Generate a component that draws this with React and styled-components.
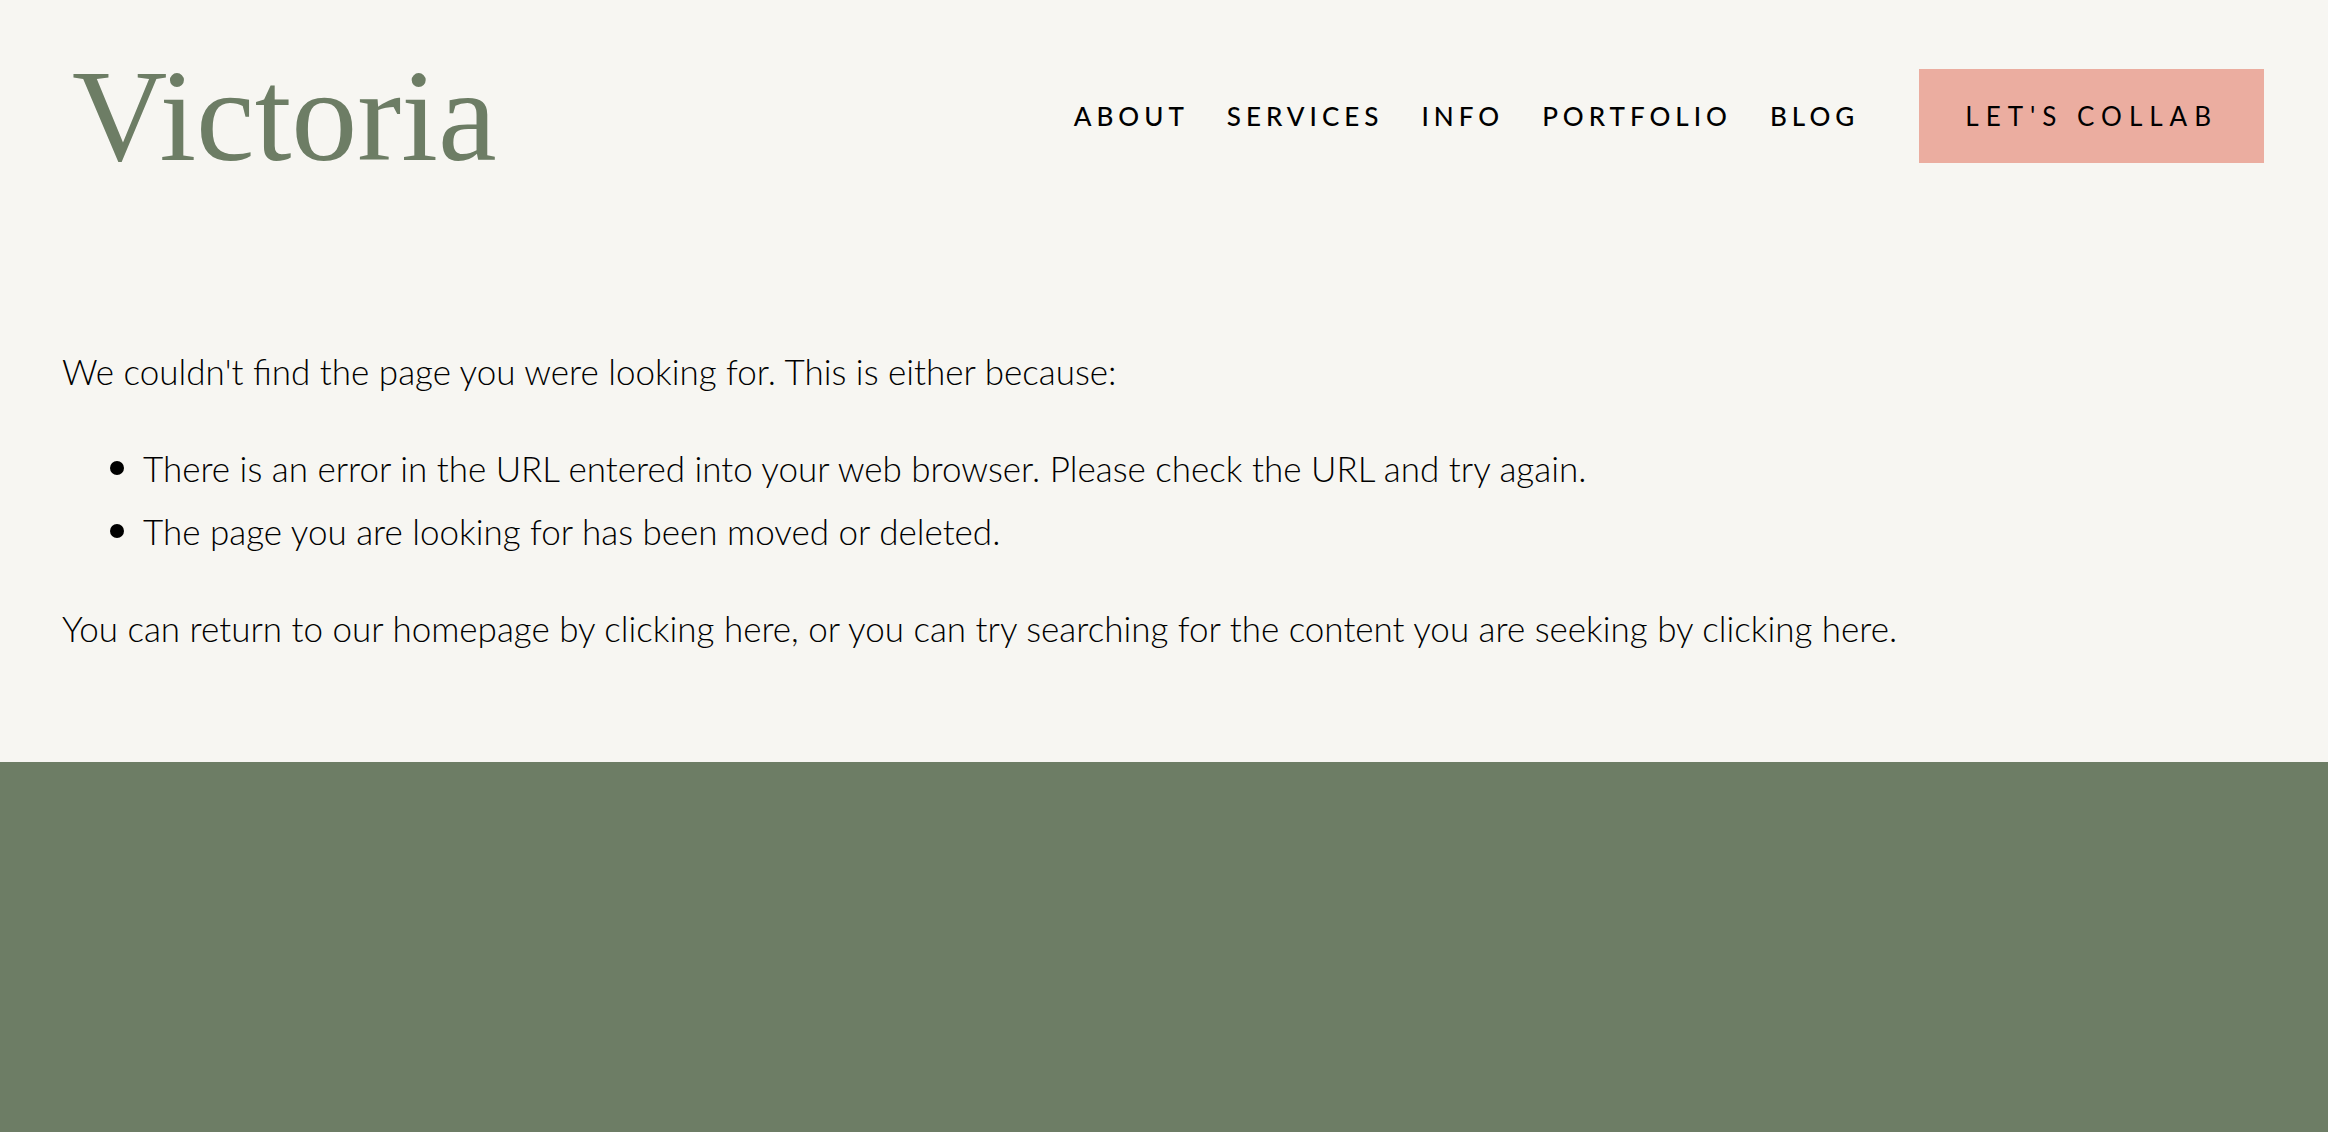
import React from "react";
import styled, { createGlobalStyle } from "styled-components";

const color = {
  cream: "#f7f6f2",
  sage: "#6d7d65",
  blush: "#ebada0",
  ink: "#000000",
};

const GlobalStyle = createGlobalStyle`
  *, *::before, *::after { box-sizing: border-box; }
  body {
    margin: 0;
    background: ${color.sage};
    color: ${color.ink};
    font-family: Lato, "Open Sans", sans-serif;
  }
`;

const Header = styled.header`
  display: flex;
  align-items: center;
  justify-content: space-between;
  gap: 40px;
  min-height: 232px;
  padding: 32px 64px 32px 72px;
  background: ${color.cream};
`;

const Logo = styled.a`
  color: ${color.sage};
  font-family: "Liberation Serif", "Times New Roman", serif;
  font-size: 132px;
  line-height: 168px;
  text-decoration: none;
`;

const HeaderActions = styled.div`
  display: flex;
  align-items: center;
  gap: 60px;
`;

const Nav = styled.nav`
  display: flex;
  flex-wrap: wrap;
  gap: 38px;
`;

const NavLink = styled.a`
  color: inherit;
  font-size: 26px;
  font-weight: 500;
  line-height: 40px;
  letter-spacing: 5px;
  text-transform: uppercase;
  text-decoration: none;
`;

const CollabLink = styled(NavLink)`
  padding: 27px 46px;
  background: ${color.blush};
  font-weight: 400;
  letter-spacing: 7px;
  white-space: nowrap;
`;

const Main = styled.main`
  display: flex;
  flex-direction: column;
  gap: 34px;
  padding: 108px 62px 102px;
  background: ${color.cream};
  font-size: 35px;
  font-weight: 300;
  line-height: 63px;
`;

const Paragraph = styled.p`
  margin: 0;
`;

const Reasons = styled.ul`
  margin: 0;
  padding: 0 0 0 48px;
  list-style: none;
`;

const Reason = styled.li`
  display: grid;
  grid-template-columns: 14px 1fr;
  column-gap: 19px;

  &::before {
    content: "";
    width: 14px;
    height: 14px;
    margin-top: 24px;
    border-radius: 50%;
    background: currentColor;
  }
`;

const TextLink = styled.a`
  color: inherit;
  text-decoration: none;
`;

const pages = ["About", "Services", "Info", "Portfolio", "Blog"];

export default function App() {
  return (
    <>
      <GlobalStyle />
      <Header>
        <Logo href="#home">Victoria</Logo>
        <HeaderActions>
          <Nav aria-label="Main">
            {pages.map((page) => (
              <NavLink key={page} href={`#${page.toLowerCase()}`}>
                {page}
              </NavLink>
            ))}
          </Nav>
          <CollabLink href="#collab">Let's Collab</CollabLink>
        </HeaderActions>
      </Header>
      <Main>
        <Paragraph>
          We couldn't find the page you were looking for. This is either because:
        </Paragraph>
        <Reasons>
          <Reason>
            There is an error in the URL entered into your web browser. Please check the URL and try again.
          </Reason>
          <Reason>The page you are looking for has been moved or deleted.</Reason>
        </Reasons>
        <Paragraph>
          You can return to our homepage by <TextLink href="#home">clicking here</TextLink>, or you can
          try searching for the content you are seeking by{" "}
          <TextLink href="#search">clicking here</TextLink>.
        </Paragraph>
      </Main>
    </>
  );
}
